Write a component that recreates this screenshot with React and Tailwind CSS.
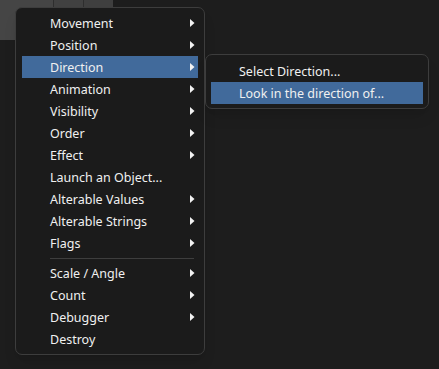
import React from 'react';

const items = [
  { label: 'Movement', sub: true },
  { label: 'Position', sub: true },
  { label: 'Direction', sub: true, active: true },
  { label: 'Animation', sub: true },
  { label: 'Visibility', sub: true },
  { label: 'Order', sub: true },
  { label: 'Effect', sub: true },
  { label: 'Launch an Object...' },
  { label: 'Alterable Values', sub: true },
  { label: 'Alterable Strings', sub: true },
  { label: 'Flags', sub: true },
  { sep: true },
  { label: 'Scale / Angle', sub: true },
  { label: 'Count', sub: true },
  { label: 'Debugger', sub: true },
  { label: 'Destroy' },
];

function Arrow() {
  return (
    <svg width="5" height="8" viewBox="0 0 5 8" className="shrink-0">
      <path d="M0 0 L4.5 4 L0 8 Z" fill="#f2f2f2" />
    </svg>
  );
}

function MenuItem({ label, sub, active }) {
  return (
    <div
      className={`flex h-[22px] items-center pl-[28px] pr-[3px] ${active ? 'bg-[#416a9b]' : ''}`}
    >
      <span className="flex-1 whitespace-nowrap pt-[2px]">{label}</span>
      {sub && <Arrow />}
    </div>
  );
}

export default function App() {
  return (
    <div
      className="relative h-[369px] w-[439px] overflow-hidden bg-[#1d1d1d] text-[12.5px] leading-[18px] text-[#f0f0f0]"
      style={{ fontFamily: '"Segoe UI", "Noto Sans", sans-serif' }}
    >
      {/* editor panels behind the popup */}
      <div className="absolute left-0 top-0 flex h-[40px] w-[113px] gap-px bg-[#2e2e2e]">
        <div className="w-[53px] bg-[#454545]" />
        <div className="w-[29px] bg-[#414141]" />
        <div className="flex-1 bg-[#3f3f3f]" />
      </div>

      <div className="absolute left-[15px] top-[7px] w-[190px] rounded-[7px] border border-[#3d3d3d] bg-[#1b1b1b] px-[6px] py-[4px] shadow-lg">
        {items.map((it, i) =>
          it.sep ? (
            <div key={i} className="flex h-[8px] items-center pl-[28px] pr-[4px]">
              <div className="h-px flex-1 bg-[#3e3e3e]" />
            </div>
          ) : (
            <MenuItem key={i} {...it} />
          )
        )}
      </div>

      <div className="absolute left-[205px] top-[54px] w-[224px] rounded-[7px] border border-[#3d3d3d] bg-[#1b1b1b] px-[5px] pb-[4px] pt-[5px] shadow-lg">
        <MenuItem label="Select Direction..." />
        <MenuItem label="Look in the direction of..." active />
      </div>
    </div>
  );
}
